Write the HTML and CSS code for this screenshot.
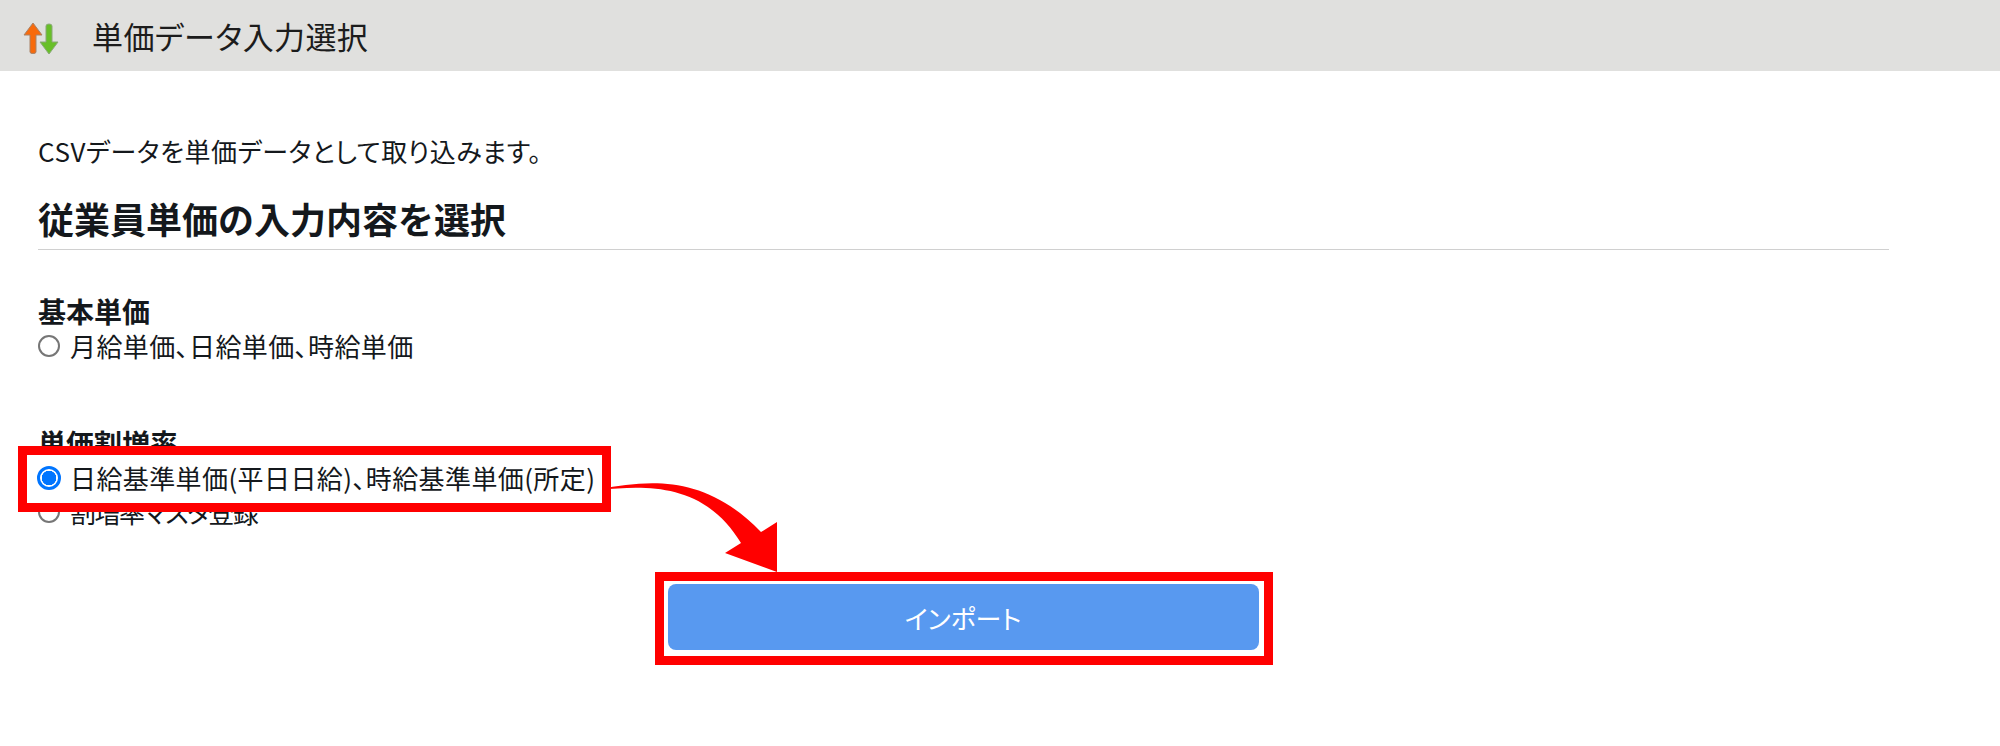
FILE: index.html
```html
<!DOCTYPE html>
<html lang="ja">
<head>
  <meta charset="UTF-8">
  <title>単価データ入力選択</title>
  <link rel="stylesheet" href="styles.css">
</head>
<body>

  <div class="title-bar">
    <svg class="title-icon" width="40" height="36" viewBox="0 0 40 36">
      <path d="M11 5 L2 17 L8 17 L8 34 Q8 35.500 11 35.500 Q14 35.500 14 34 L14 17 L20 17 Z" fill="#f76a0c" stroke="#a88266" stroke-width="1"/>
      <path d="M24 8 Q24 6 27 6 Q30 6 30 8 L30 24 L36 24 L27 36 L18 24 L24 24 Z" fill="#68bf28" stroke="#8aa878" stroke-width="1"/>
    </svg>
    <h1>単価データ入力選択</h1>
  </div>

  <div class="content">
    <p class="lead">CSVデータを単価データとして取り込みます。</p>
    <h2>従業員単価の入力内容を選択</h2>

    <div class="group">
      <h3>基本単価</h3>
      <label class="option"><input type="radio" name="kind">月給単価、日給単価、時給単価</label>
    </div>

    <div class="group">
      <h3>単価割増率</h3>
      <label class="option picked"><input type="radio" name="kind" checked>日給基準単価(平日日給)、時給基準単価(所定)</label>
      <label class="option tight"><input type="radio" name="kind">割増率マスタ登録</label>
    </div>

    <div class="import-wrap">
      <button class="import-button">インポート</button>
    </div>
  </div>

  <!-- 注釈の矢印 -->
  <svg class="callout-arrow" width="190" height="100" viewBox="0 0 190 100">
    <path d="M10 11 C60 2 115 -4 171 54 L187 44 L187 94 L135 75 L151 65 C115 6 60 7 10 12 Z" fill="#ff0000"/>
  </svg>

</body>
</html>
```

FILE: styles.css
```css
body {
  font-family: "Noto Sans CJK JP", sans-serif;
  color: #14181c;
  background-color: #fff;
  margin: 0;
  height: 746px;
  position: relative;
  overflow: hidden;
}

.title-bar {
  height: 71px;
  background-color: #e0e0de;
  display: flex;
  align-items: center;
  padding-left: 22px;
  gap: 30px;
}

.title-bar h1 {
  margin: 0;
  font-size: 31px;
  font-weight: 400;
  line-height: 40px;
  color: #1c1c1c;
  font-feature-settings: "palt";
  letter-spacing: 0.4px;
}

.title-icon {
  flex: none;
}

.content {
  width: 1851px;
  margin-left: 38px;
  padding-top: 61px;
}

.lead {
  margin: 0;
  font-size: 26px;
  line-height: 38px;
  font-feature-settings: "palt";
  letter-spacing: 0.5px;
}

h2 {
  margin: 24px 0 0;
  padding-bottom: 7px;
  font-size: 36px;
  line-height: 48px;
  border-bottom: 1px solid #d0d0d0;
}

.group {
  margin-top: 43px;
}

.group + .group {
  margin-top: 62px;
}

h3 {
  margin: 0;
  font-size: 28px;
  line-height: 36px;
}

.option {
  display: flex;
  align-items: center;
  gap: 10px;
  font-size: 26px;
  line-height: 34px;
  font-feature-settings: "palt";
  letter-spacing: 0.4px;
}

.option input {
  appearance: none;
  width: 22px;
  height: 22px;
  margin: 0;
  flex: none;
  border: 2px solid #767676;
  border-radius: 50%;
  background-color: #fff;
}

.tight {
  letter-spacing: -1.5px;
}

.picked {
  position: relative;
  z-index: 1;
  gap: 9px;
}

/* 赤枠 */
.picked::before {
  content: "";
  position: absolute;
  left: -20px;
  top: -15px;
  width: 575px;
  height: 48px;
  border: 9px solid #ff0000;
  background-color: #fff;
  z-index: -1;
}

.picked input {
  width: 24px;
  height: 24px;
  margin-left: -1px;
  border: 3px solid #0075ff;
  background: radial-gradient(circle, #0075ff 0 7px, #fff 7.5px);
}

.import-wrap {
  width: 591px;
  margin: 43px auto 0;
  border: 9px solid #ff0000;
  padding: 3px 5px 6px 4px;
}

.import-button {
  display: block;
  width: 591px;
  height: 66px;
  background-color: #5899f0;
  color: #fff;
  border: none;
  border-radius: 8px;
  font-family: inherit;
  font-size: 26px;
  font-feature-settings: "palt";
}

.callout-arrow {
  position: absolute;
  left: 590px;
  top: 478px;
}
```
